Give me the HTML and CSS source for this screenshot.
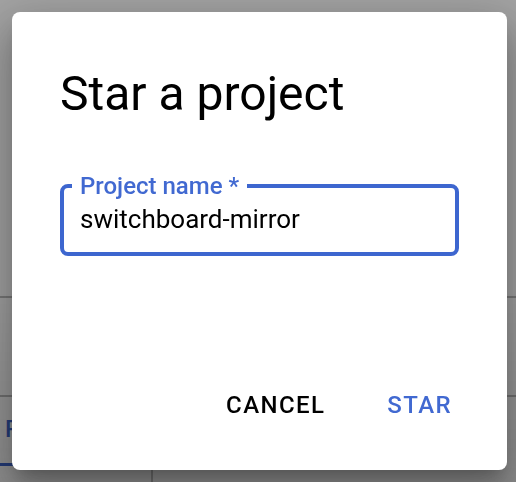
FILE: index.html
```html
<!DOCTYPE html>
<html lang="en">
<head>
<meta charset="utf-8">
<title>Star a project</title>
<link rel="stylesheet" href="styles.css">
</head>
<body>
<div class="page">
  <div class="page-head"></div>
  <div class="page-row"></div>
  <div class="page-tabs">
    <div class="tab tab-active">Projects</div>
    <div class="tab-rest"></div>
  </div>
</div>
<div class="backdrop">
  <div class="dialog" role="dialog" aria-labelledby="dlg-title">
    <h2 class="dialog-title" id="dlg-title">Star a project</h2>
    <fieldset class="field">
      <legend class="field-label">Project name *</legend>
      <div class="field-value">switchboard-mirror</div>
    </fieldset>
    <div class="actions">
      <button class="btn btn-cancel">CANCEL</button>
      <button class="btn btn-primary">STAR</button>
    </div>
  </div>
</div>
</body>
</html>
```
FILE: styles.css
```css
html, body {
  margin: 0;
  height: 100%;
}
body {
  font-family: Roboto, "Liberation Sans", sans-serif;
  background: #ffffff;
  overflow: hidden;
}
.page {
  height: 482px;
  display: flex;
  flex-direction: column;
}
.page-head {
  height: 296px;
  flex: none;
  border-bottom: 2px solid #bdbdbd;
}
.page-row {
  height: 97px;
  flex: none;
  border-bottom: 2px solid #bdbdbd;
}
.page-tabs {
  display: flex;
  flex: 1;
}
.tab {
  width: 151px;
  height: 69px;
  box-sizing: border-box;
  font-size: 24px;
  font-weight: 500;
  color: #3f67cf;
  padding: 18px 0 0 5px;
  flex: none;
}
.tab-active {
  border-bottom: 3px solid #3f67cf;
}
.tab-rest {
  flex: 1;
  border-left: 2px solid #c4c4c4;
  margin-top: 69px;
}
.backdrop {
  position: fixed;
  inset: 0;
  background: linear-gradient(rgba(0,0,0,0.36), rgba(0,0,0,0.36) 60%, rgba(0,0,0,0.44));
}
.dialog {
  position: absolute;
  left: 12px;
  top: 12px;
  width: 495px;
  height: 458px;
  box-sizing: border-box;
  background: #ffffff;
  border-radius: 8px;
  padding: 54px 48px 38px;
  display: flex;
  flex-direction: column;
  box-shadow: 0 11px 15px -7px rgba(0,0,0,0.2), 0 24px 38px 3px rgba(0,0,0,0.16), 0 14px 50px 10px rgba(0,0,0,0.2);
}
.dialog-title {
  margin: 0;
  font-size: 48px;
  line-height: 56px;
  font-weight: 400;
  color: #000000;
}
.field {
  margin: 50px 0 0;
  padding: 4px 16px 18px;
  border: 4px solid #3d66cf;
  border-radius: 8px;
  min-width: 0;
}
.field-label {
  margin-left: -8px;
  padding: 0 8px;
  font-size: 24px;
  line-height: 28px;
  font-weight: 500;
  color: #4169d1;
}
.field-value {
  font-size: 26px;
  line-height: 30px;
  color: #000000;
}
.actions {
  margin-top: auto;
  margin-right: -5px;
  display: flex;
  justify-content: flex-end;
  gap: 38px;
}
.btn {
  font-family: inherit;
  background: none;
  border: none;
  padding: 13px 12px;
  font-size: 24px;
  line-height: 28px;
  font-weight: 500;
  letter-spacing: 1.4px;
  cursor: pointer;
}
.btn-cancel {
  color: #000000;
}
.btn-primary {
  color: #4169d1;
}
```
